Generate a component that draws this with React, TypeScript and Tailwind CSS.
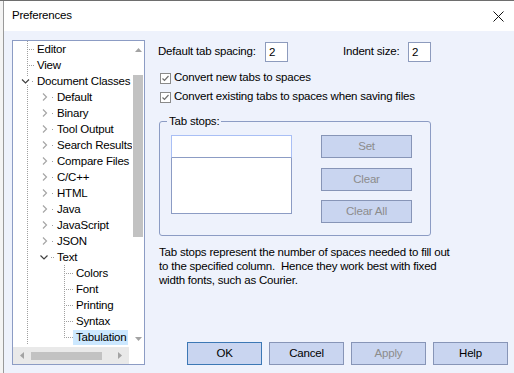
import type { ReactNode } from 'react'

type Row = {
  label: string
  level: 0 | 1 | 2
  kind: 'leaf' | 'open' | 'closed'
  selected?: boolean
  last?: boolean
}

const rows: Row[] = [
  { label: 'Editor', level: 0, kind: 'leaf' },
  { label: 'View', level: 0, kind: 'leaf' },
  { label: 'Document Classes', level: 0, kind: 'open' },
  { label: 'Default', level: 1, kind: 'closed' },
  { label: 'Binary', level: 1, kind: 'closed' },
  { label: 'Tool Output', level: 1, kind: 'closed' },
  { label: 'Search Results', level: 1, kind: 'closed' },
  { label: 'Compare Files', level: 1, kind: 'closed' },
  { label: 'C/C++', level: 1, kind: 'closed' },
  { label: 'HTML', level: 1, kind: 'closed' },
  { label: 'Java', level: 1, kind: 'closed' },
  { label: 'JavaScript', level: 1, kind: 'closed' },
  { label: 'JSON', level: 1, kind: 'closed' },
  { label: 'Text', level: 1, kind: 'open' },
  { label: 'Colors', level: 2, kind: 'leaf' },
  { label: 'Font', level: 2, kind: 'leaf' },
  { label: 'Printing', level: 2, kind: 'leaf' },
  { label: 'Syntax', level: 2, kind: 'leaf' },
  { label: 'Tabulation', level: 2, kind: 'leaf', selected: true, last: true },
]

const LINE = '#a0a0a0'

// tree lines + expander glyph in front of each label
function RowPrefix({ row }: { row: Row }) {
  const w = row.level === 0 ? 21 : row.level === 1 ? 41 : 60
  return (
    <svg width={w} height="16" className="shrink-0" shapeRendering="crispEdges">
      <line x1="14.5" y1="0" x2="14.5" y2="16" stroke={LINE} strokeDasharray="1 1" />
      {row.level === 0 && row.kind === 'leaf' && (
        <line x1="16" y1="8.5" x2="22" y2="8.5" stroke={LINE} strokeDasharray="1 1" />
      )}
      {row.level === 0 && row.kind === 'open' && (
        <>
          <rect x="8" y="4" width="10" height="8" fill="white" />
          <path d="M9 6.5l3.5 3.5 3.5-3.5" fill="none" stroke="#404040" strokeWidth="1.2" shapeRendering="auto" />
          <line x1="19" y1="8.5" x2="22" y2="8.5" stroke={LINE} strokeDasharray="1 1" />
        </>
      )}
      {row.level === 1 && row.kind === 'closed' && (
        <>
          <path d="M30 4.5l3.5 3.5-3.5 3.5" fill="none" stroke="#a6a6a6" strokeWidth="1.2" shapeRendering="auto" />
          <line x1="39" y1="8.5" x2="42" y2="8.5" stroke={LINE} strokeDasharray="1 1" />
        </>
      )}
      {row.level === 1 && row.kind === 'open' && (
        <>
          <path d="M27.5 6.5l3.5 3.5 3.5-3.5" fill="none" stroke="#404040" strokeWidth="1.2" shapeRendering="auto" />
          <line x1="38" y1="8.5" x2="42" y2="8.5" stroke={LINE} strokeDasharray="1 1" />
          <line x1="51.5" y1="14" x2="51.5" y2="16" stroke={LINE} strokeDasharray="1 1" />
        </>
      )}
      {row.level === 2 && (
        <>
          <line x1="51.5" y1="0" x2="51.5" y2={row.last ? 9 : 16} stroke={LINE} strokeDasharray="1 1" />
          <line x1="53" y1="8.5" x2="60" y2="8.5" stroke={LINE} strokeDasharray="1 1" />
        </>
      )}
    </svg>
  )
}

function Tri({ dir }: { dir: 'up' | 'down' | 'left' | 'right' }) {
  const d = {
    up: 'M0 4L3.5 0 7 4z',
    down: 'M0 0h7L3.5 4z',
    left: 'M4 0v7L0 3.5z',
    right: 'M0 0l4 3.5L0 7z',
  }[dir]
  const vertical = dir === 'up' || dir === 'down'
  return (
    <svg width={vertical ? 7 : 4} height={vertical ? 4 : 7}>
      <path d={d} fill="#a3a3a3" />
    </svg>
  )
}

function TreePanel() {
  return (
    <div className="w-[133px] h-[325px] shrink-0 border border-[#8c9cc4] bg-white flex flex-col">
      <div className="flex h-[306px]">
        <div className="flex-1 min-w-0 overflow-hidden flex flex-col">
          {rows.map((row) => (
            <div key={row.label} className="h-[16px] flex items-center whitespace-nowrap">
              <RowPrefix row={row} />
              <span
                className={
                  row.selected
                    ? 'pl-[3px] pr-[2px] h-[15px] leading-[15px] bg-[#cce8ff]'
                    : 'pl-[3px] pr-[2px] leading-[16px]'
                }
              >
                {row.label}
              </span>
            </div>
          ))}
        </div>
        <div className="w-[12px] shrink-0 flex flex-col items-center">
          <div className="h-[17px] flex items-center justify-center">
            <Tri dir="up" />
          </div>
          <div className="mt-[17px] w-[10px] h-[162px] bg-[#c2c2c2]" />
          <div className="mt-auto h-[17px] flex items-center justify-center">
            <Tri dir="down" />
          </div>
        </div>
      </div>
      <div className="flex h-[17px]">
        <div className="flex-1 bg-[#e9e9e9] flex items-center">
          <div className="w-[18px] flex justify-center">
            <Tri dir="left" />
          </div>
          <div className="w-[71px] h-[8px] bg-[#c2c2c2]" />
          <div className="ml-auto w-[18px] flex justify-center">
            <Tri dir="right" />
          </div>
        </div>
        <div className="w-[15px] bg-white" />
      </div>
    </div>
  )
}

function Checkbox({ children }: { children: ReactNode }) {
  return (
    <div className="h-[16px] flex items-center pl-[2px]">
      <div className="w-[11px] h-[11px] border border-[#8a8a8a] bg-white flex items-center justify-center">
        <svg width="9" height="9" viewBox="0 0 9 9">
          <path d="M1.5 4.5l2 2 4-4.5" fill="none" stroke="#707070" strokeWidth="1.2" />
        </svg>
      </div>
      <span className="ml-[3px]">{children}</span>
    </div>
  )
}

function SmallButton({ children }: { children: ReactNode }) {
  return (
    <div className="w-[91px] h-[23px] border border-[#8795b7] bg-[#c9d5f0] text-[#8c8c8c] flex items-center justify-center">
      {children}
    </div>
  )
}

function DialogButton({ children, isDefault, disabled }: { children: ReactNode; isDefault?: boolean; disabled?: boolean }) {
  return (
    <div
      className={
        'w-[75px] h-[23px] border bg-[#c9d5f0] flex items-center justify-center ' +
        (isDefault ? 'border-[#3c78b5] ' : 'border-[#8795b7] ') +
        (disabled ? 'text-[#8c8c8c]' : 'text-black')
      }
    >
      {children}
    </div>
  )
}

export default function App() {
  return (
    <div className="w-[514px] h-[373px] overflow-hidden flex flex-col bg-white text-[11.5px] tracking-[-0.2px] text-black font-['Liberation_Sans',Arial,sans-serif]">
      <div className="h-[1px] bg-[#6e6e6e] shrink-0" />
      <div className="flex flex-1 min-h-0">
        <div className="w-[3px] bg-[#f4f4f4] shrink-0" />
        <div className="flex-1 flex flex-col border-l border-[#9a9a9a]">
          {/* title bar */}
          <div className="h-[30px] shrink-0 bg-white flex items-center pl-[8px] pr-[10px]">
            <span>Preferences</span>
            <svg width="11" height="11" viewBox="0 0 11 11" className="ml-auto">
              <path d="M0.5 0.5l10 10M10.5 0.5l-10 10" stroke="#111" strokeWidth="1" />
            </svg>
          </div>

          {/* client area */}
          <div className="flex-1 bg-[#eef2fc] flex pt-[9px] pl-[8px]">
            <TreePanel />

            <div className="flex-1 ml-[13px] pr-[6px] flex flex-col h-[325px]">
              <div className="mt-[2px] h-[20px] flex items-center">
                <span className="w-[107px]">Default tab spacing:</span>
                <div className="w-[23px] h-[20px] border border-[#8d9bbd] bg-white pl-[3px] leading-[18px]">2</div>
                <span className="ml-[55px] w-[65px]">Indent size:</span>
                <div className="w-[23px] h-[20px] border border-[#8d9bbd] bg-white pl-[3px] leading-[18px]">2</div>
              </div>

              <div className="mt-[8px] flex flex-col gap-[3px]">
                <Checkbox>Convert new tabs to spaces</Checkbox>
                <Checkbox>Convert existing tabs to spaces when saving files</Checkbox>
              </div>

              <fieldset className="mt-[9px] ml-[1px] w-[272px] border border-[#8c9cc4] rounded-[3px] pb-[12px]">
                <legend className="ml-[7px] px-[2px] leading-[14px]">Tab stops:</legend>
                <div className="mt-[7px] pl-[11px] flex">
                  <div className="w-[121px] h-[79px] border border-[#8c9cc4] bg-white">
                    <div className="h-[23px] -m-[1px] border border-[#a9bff5] border-b-[#8c9cc4]" />
                  </div>
                  <div className="ml-[29px] flex flex-col">
                    <SmallButton>Set</SmallButton>
                    <div className="mt-[10px]">
                      <SmallButton>Clear</SmallButton>
                    </div>
                    <div className="mt-[9px]">
                      <SmallButton>Clear All</SmallButton>
                    </div>
                  </div>
                </div>
              </fieldset>

              <p className="mt-[9px] ml-[1px] leading-[14px]">
                Tab stops represent the number of spaces needed to fill out
                <br />
                to the specified column.&nbsp; Hence they work best with fixed
                <br />
                width fonts, such as Courier.
              </p>

              <div className="mt-auto flex justify-end gap-[7px]">
                <DialogButton isDefault>OK</DialogButton>
                <DialogButton>Cancel</DialogButton>
                <DialogButton disabled>Apply</DialogButton>
                <DialogButton>Help</DialogButton>
              </div>
            </div>
          </div>
        </div>
      </div>
    </div>
  )
}
